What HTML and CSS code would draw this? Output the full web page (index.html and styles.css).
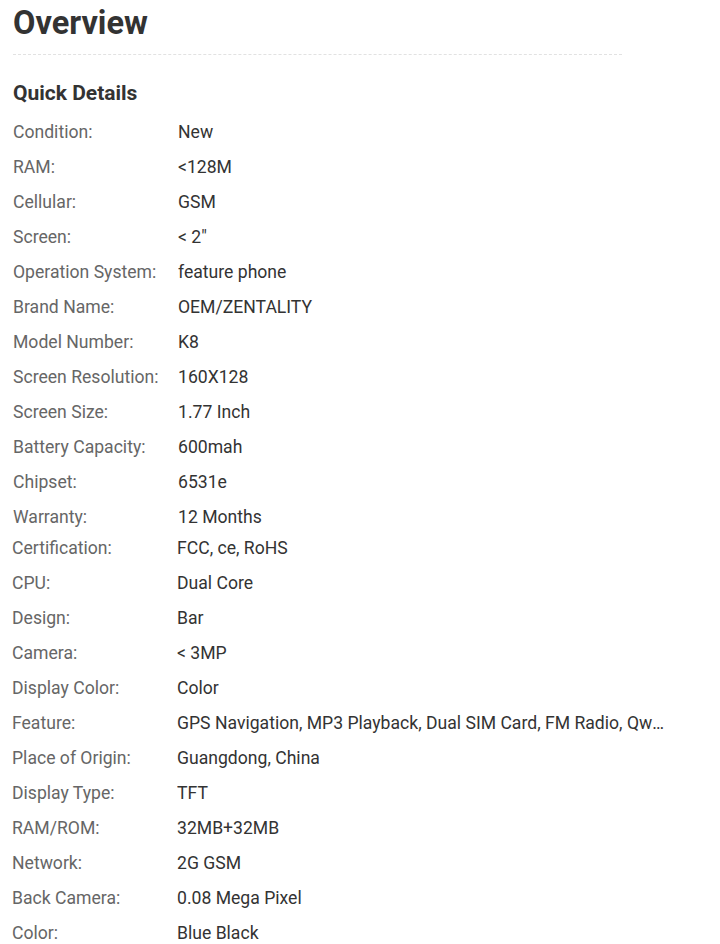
FILE: index.html
```html
<!DOCTYPE html>
<html>
<head>
<meta charset="utf-8">
<link rel="stylesheet" href="styles.css">
</head>
<body>
<div class="page">
  <h1 class="title">Overview</h1>
  <h2 class="subtitle">Quick Details</h2>
  <div class="details">
    <div class="row"><span class="label">Condition:</span><span class="value">New</span></div>
    <div class="row"><span class="label">RAM:</span><span class="value">&lt;128M</span></div>
    <div class="row"><span class="label">Cellular:</span><span class="value">GSM</span></div>
    <div class="row"><span class="label">Screen:</span><span class="value">&lt; 2"</span></div>
    <div class="row"><span class="label">Operation System:</span><span class="value">feature phone</span></div>
    <div class="row"><span class="label">Brand Name:</span><span class="value">OEM/ZENTALITY</span></div>
    <div class="row"><span class="label">Model Number:</span><span class="value">K8</span></div>
    <div class="row"><span class="label">Screen Resolution:</span><span class="value">160X128</span></div>
    <div class="row"><span class="label">Screen Size:</span><span class="value">1.77 Inch</span></div>
    <div class="row"><span class="label">Battery Capacity:</span><span class="value">600mah</span></div>
    <div class="row"><span class="label">Chipset:</span><span class="value">6531e</span></div>
    <div class="row"><span class="label">Warranty:</span><span class="value">12 Months</span></div>
  </div>
  <div class="details details-more">
    <div class="row"><span class="label">Certification:</span><span class="value">FCC, ce, RoHS</span></div>
    <div class="row"><span class="label">CPU:</span><span class="value">Dual Core</span></div>
    <div class="row"><span class="label">Design:</span><span class="value">Bar</span></div>
    <div class="row"><span class="label">Camera:</span><span class="value">&lt; 3MP</span></div>
    <div class="row"><span class="label">Display Color:</span><span class="value">Color</span></div>
    <div class="row"><span class="label">Feature:</span><span class="value">GPS Navigation, MP3 Playback, Dual SIM Card, FM Radio, Qwerty Keyboard</span></div>
    <div class="row"><span class="label">Place of Origin:</span><span class="value">Guangdong, China</span></div>
    <div class="row"><span class="label">Display Type:</span><span class="value">TFT</span></div>
    <div class="row"><span class="label">RAM/ROM:</span><span class="value">32MB+32MB</span></div>
    <div class="row"><span class="label">Network:</span><span class="value">2G GSM</span></div>
    <div class="row"><span class="label">Back Camera:</span><span class="value">0.08 Mega Pixel</span></div>
    <div class="row"><span class="label">Color:</span><span class="value">Blue Black</span></div>
  </div>
</div>
</body>
</html>
```
FILE: styles.css
```css
html, body {
  margin: 0;
  padding: 0;
  background: #fff;
}
body {
  font-family: Roboto, "Liberation Sans", sans-serif;
  color: #333;
}
.page {
  padding: 0 0 0 13px;
}
.title {
  width: 609px;
  margin: 0;
  padding-top: 3px;
  font-size: 32.5px;
  line-height: 40px;
  font-weight: 700;
  color: #333;
  padding-bottom: 11px;
  border-bottom: 1px dashed #e2e2e2;
}
.subtitle {
  margin: 0;
  padding-top: 25px;
  font-size: 21px;
  line-height: 26px;
  font-weight: 700;
  color: #333;
  padding-bottom: 9px;
}
.details {
  display: flex;
  flex-direction: column;
}
.details-more {
  margin-top: -4px;
  margin-left: -1px;
}
.row {
  display: flex;
  height: 35px;
  line-height: 35px;
  font-size: 17.6px;
}
.label {
  flex: 0 0 165px;
  color: #666;
}
.value {
  width: 488px;
  color: #333;
  white-space: nowrap;
  overflow: hidden;
  text-overflow: ellipsis;
}
```
